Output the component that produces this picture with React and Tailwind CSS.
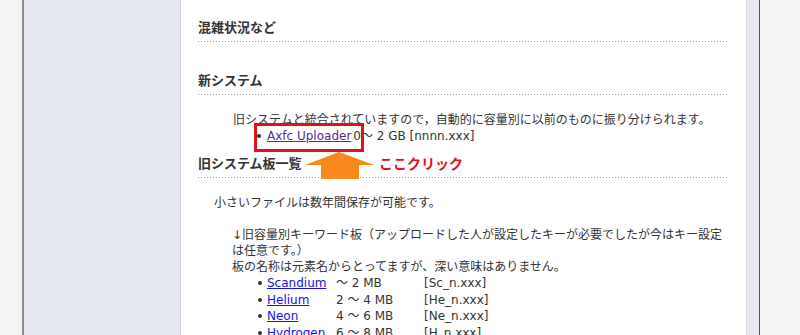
import React from 'react';

const font = { fontFamily: '"DejaVu Sans", "Noto Sans CJK JP", sans-serif' };

const Heading = ({ children }) => (
  <div>
    <h2 className="text-[13px] font-bold leading-[16px] text-[#333] pb-[6px]" style={{ fontFamily: '"Noto Sans CJK JP", sans-serif' }}>
      {children}
    </h2>
    <div className="h-px bg-[linear-gradient(to_right,#9a9a9a_1px,transparent_1px)] bg-[length:3px_1px]"></div>
  </div>
);

const boards = [
  { name: 'Scandium', size: '～ 2 MB', file: '[Sc_n.xxx]' },
  { name: 'Helium', size: '2 ～ 4 MB', file: '[He_n.xxx]' },
  { name: 'Neon', size: '4 ～ 6 MB', file: '[Ne_n.xxx]' },
  { name: 'Hydrogen', size: '6 ～ 8 MB', file: '[H_n.xxx]' },
];

export default function App() {
  return (
    <div className="flex h-[335px] overflow-hidden text-[12px] leading-[16px] text-[#333]" style={font}>
      <div className="w-[22px] bg-[#f4f4f4]"></div>
      <div className="w-[2px] bg-[#8c8c8c]"></div>
      <div className="w-[157px] bg-[#e6e9f0] border-r border-[#d4d8df]"></div>

      {/* main content */}
      <div className="relative w-[566px] bg-white border-r border-[#dcdcdc] px-[17px] pt-[19px]">
        <Heading>混雑状況など</Heading>

        <div className="mt-[30px]">
          <Heading>新システム</Heading>
          <div className="pt-[17px] pl-[35px]">
            <p>旧システムと統合されていますので，自動的に容量別に以前のものに振り分けられます。</p>
            <ul className="pl-[24px]">
              <li className="flex items-center">
                <span className="w-[4px] h-[4px] rounded-full bg-[#333] mr-[6px]"></span>
                <a href="#" className="text-[#5a2a9a] underline mr-[2px]">Axfc Uploader</a>
                <span>0～ 2 GB [nnnn.xxx]</span>
              </li>
            </ul>
          </div>
        </div>

        <div className="mt-[11px]">
          <Heading>旧システム板一覧</Heading>
          <div className="pt-[17px] pl-[16px]">
            <p>小さいファイルは数年間保存が可能です。</p>
            <div className="pl-[18px] pt-[16px]">
              <p>↓旧容量別キーワード板（アップロードした人が設定したキーが必要でしたが今はキー設定は任意です。）</p>
              <p>板の名称は元素名からとってますが、深い意味はありません。</p>
              <ul className="pl-[35px]">
                {boards.map((b) => (
                  <li key={b.name} className="flex items-center leading-[16.5px]">
                    <span className="w-[4px] h-[4px] rounded-full bg-[#333] -ml-[9px] mr-[5px]"></span>
                    <a href="#" className="w-[69px] text-[#1414e6] underline">{b.name}</a>
                    <span className="w-[88px]">{b.size}</span>
                    <span>{b.file}</span>
                  </li>
                ))}
              </ul>
            </div>
          </div>
        </div>

        {/* annotation overlays */}
        <div className="absolute left-[73px] top-[123px] w-[110px] h-[29px] border-[3px] border-[#e3101c]"></div>
        <svg className="absolute left-[123px] top-[151px]" width="72" height="28" viewBox="0 0 72 28">
          <polygon points="35,1 70,14 55,14 55,28 17,28 17,14 1,14" fill="#f7891f" />
        </svg>
        <span
          className="absolute left-[198px] top-[154px] text-[14px] font-bold leading-[18px] text-[#e3101c]"
          style={{ fontFamily: '"Noto Sans CJK JP", sans-serif' }}
        >
          ここクリック
        </span>
      </div>

      <div className="w-[12px] bg-[#e6e9f0]"></div>
      <div className="w-[1px] bg-[#555]"></div>
      <div className="flex-1 bg-[#f4f4f4]"></div>
    </div>
  );
}
